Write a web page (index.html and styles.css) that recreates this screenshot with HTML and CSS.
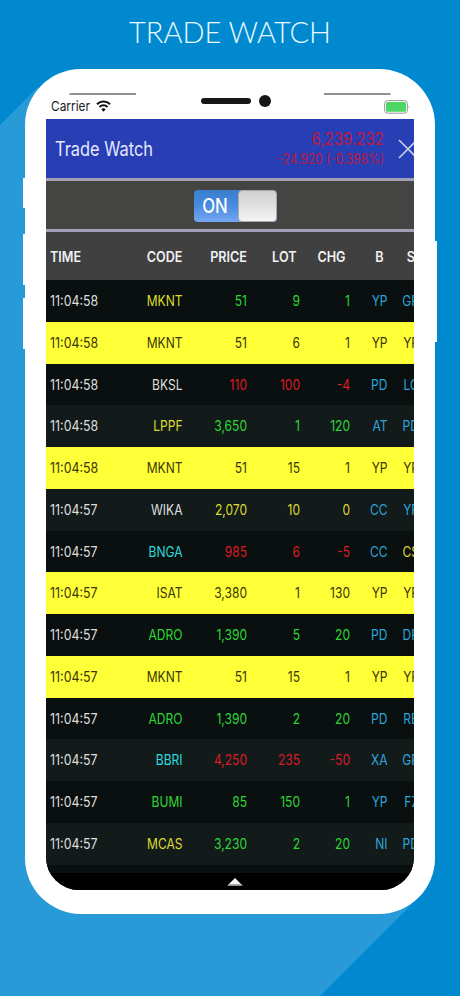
FILE: index.html
```
<!DOCTYPE html>
<html lang="en">
<head>
  <meta charset="UTF-8" />
  <meta name="viewport" content="width=device-width, initial-scale=1.0" />
  <title>Trade Watch</title>
  <link rel="stylesheet" href="styles.css">
</head>
<body>
  <h1>TRADE WATCH</h1>

  <div class="phone">
    <i class="side-button mute"></i>
    <i class="side-button volume-up"></i>
    <i class="side-button volume-down"></i>
    <i class="side-button power"></i>

    <div class="status-bar">
      <span class="carrier">Carrier</span>
      <svg class="wifi" width="15" height="12" viewBox="0 0 15 12">
        <path d="M1 4.2a9.2 9.2 0 0 1 13 0M3.5 6.9a5.7 5.7 0 0 1 8 0" fill="none" stroke="#111" stroke-width="2.1"/>
        <path d="M7.5 11.8 5.3 9.3a3.2 3.2 0 0 1 4.4 0z" fill="#111"/>
      </svg>
      <i class="speaker"></i>
      <i class="camera"></i>
      <svg class="battery" width="26" height="14" viewBox="0 0 26 14">
        <rect x=".6" y=".6" width="22.8" height="12.6" rx="3" fill="#fff" stroke="#999"/>
        <rect x="2" y="2" width="20" height="9.8" rx="1.6" fill="#4cd663"/>
        <path d="M24.4 6.2l1.2 1.8" stroke="#bbb"/>
      </svg>
      <i class="edge edge-left"></i>
      <i class="edge edge-right"></i>
    </div>

    <div class="screen">
      <header class="title-bar">
        <span class="title">Trade Watch</span>
        <div class="index">
          <div class="index-value">6,239.232</div>
          <div class="index-change">-24.920 (-0.398%)</div>
        </div>
        <svg class="close" width="20" height="20" viewBox="0 0 20 20">
          <path d="M1 1l18 18M19 1L1 19" stroke="#c3cbee" stroke-width="1.7"/>
        </svg>
      </header>

      <div class="switch-bar">
        <div class="switch"><span>ON</span><i></i></div>
      </div>

      <div class="row head">
        <span>TIME</span><span>CODE</span><span>PRICE</span><span>LOT</span><span>CHG</span><span>B</span><span>S</span>
      </div>
      <div id="trades"></div>

      <div class="drawer">
        <svg width="16" height="8" viewBox="0 0 18 8" preserveAspectRatio="none"><path d="M9 0l8.5 7.5H.5z" fill="#f4f4f4"/><path d="M2 6.2h14l1.5 1.3H.5z" fill="#999"/></svg>
      </div>
    </div>
  </div>

  <script>
    // time, code, price, lot, chg, buyer, seller, code color, number color, seller color
    const trades = [
      ['11:04:58', 'MKNT', '51', '9', '1', 'YP', 'GR', 'yellow', 'green'],
      ['11:04:58', 'MKNT', '51', '6', '1', 'YP', 'YP', 'marked'],
      ['11:04:58', 'BKSL', '110', '100', '-4', 'PD', 'LG', 'white', 'red'],
      ['11:04:58', 'LPPF', '3,650', '1', '120', 'AT', 'PD', 'yellow', 'green'],
      ['11:04:58', 'MKNT', '51', '15', '1', 'YP', 'YP', 'marked'],
      ['11:04:57', 'WIKA', '2,070', '10', '0', 'CC', 'YP', 'white', 'yellow'],
      ['11:04:57', 'BNGA', '985', '6', '-5', 'CC', 'CS', 'cyan', 'red', 'yellow'],
      ['11:04:57', 'ISAT', '3,380', '1', '130', 'YP', 'YP', 'marked'],
      ['11:04:57', 'ADRO', '1,390', '5', '20', 'PD', 'DR', 'green', 'green'],
      ['11:04:57', 'MKNT', '51', '15', '1', 'YP', 'YP', 'marked'],
      ['11:04:57', 'ADRO', '1,390', '2', '20', 'PD', 'RB', 'green', 'green'],
      ['11:04:57', 'BBRI', '4,250', '235', '-50', 'XA', 'GR', 'cyan', 'red'],
      ['11:04:57', 'BUMI', '85', '150', '1', 'YP', 'FZ', 'green', 'green'],
      ['11:04:57', 'MCAS', '3,230', '2', '20', 'NI', 'PD', 'yellow', 'green']
    ];

    const list = document.getElementById('trades');

    trades.forEach((trade) => {
      const [codeColor, numColor, sellerColor = 'blue'] = trade.slice(7);
      const marked = codeColor === 'marked';
      const colors = ['white', codeColor, numColor, numColor, numColor, 'blue', sellerColor];

      const row = document.createElement('div');
      row.className = marked ? 'row marked' : 'row';
      trade.slice(0, 7).forEach((text, i) => {
        const cell = document.createElement('span');
        cell.textContent = text;
        if (!marked) cell.className = colors[i];
        row.appendChild(cell);
      });
      list.appendChild(row);
    });
  </script>
</body>
</html>
```
FILE: styles.css
```
body {
  margin: 0;
  height: 996px;
  overflow: hidden;
  background: #0089cf;
  font-family: Inter, Roboto, sans-serif;
  position: relative;
}

/* lighter diagonal band behind the phone */
body::before {
  content: "";
  position: absolute;
  inset: 0;
  background: #279ad7;
  clip-path: polygon(0 125px, 38px 87px, 80px 150px, 380px 860px, 412px 904px, 320px 996px, 0 996px);
}

h1 {
  margin: 0;
  height: 69px;
  box-sizing: border-box;
  padding-top: 14px;
  text-align: center;
  font: 300 29px/36px Lato, sans-serif;
  color: #e9fbff;
  position: relative;
  white-space: nowrap;
}

.phone {
  position: relative;
  box-sizing: border-box;
  width: 410px;
  height: 844.5px;
  margin: 0 auto;
  padding: 24px 21px 0;
  border-radius: 56px;
  background: #fff;
}

.side-button {
  position: absolute;
  left: -2px;
  width: 4px;
  height: 51px;
  background: #fff;
}

.mute {
  top: 109px;
  height: 30px;
}

.volume-up {
  top: 165px;
}

.volume-down {
  top: 229px;
}

.power {
  left: auto;
  right: -2px;
  top: 172px;
  height: 101px;
}

.status-bar {
  position: relative;
  display: flex;
  align-items: center;
  height: 26px;
  padding: 0 4px 0 5px;
}

.carrier {
  width: 45px;
  font-size: 13.5px;
  line-height: 28px;
  color: #222;
  white-space: nowrap;
  transform: scaleX(.88);
  transform-origin: left;
}

.wifi {
  margin-top: -1px;
}

.speaker {
  width: 50px;
  height: 6px;
  margin: -10px 8px 0 90px;
  border-radius: 3px;
  background: #161616;
}

.camera {
  width: 12px;
  height: 12px;
  margin-top: -10px;
  border-radius: 50%;
  background: #161616;
}

.battery {
  margin: 2px 0 0 auto;
}

.edge {
  position: absolute;
  top: 0;
  width: 67px;
  height: 2px;
  background: #919191;
}

.edge-left {
  left: 23px;
  border-radius: 20px 2px 0 0;
}

.edge-right {
  right: 23px;
  border-radius: 2px 20px 0 0;
}

.screen {
  height: 770.5px;
  overflow: hidden;
  border-radius: 0 0 33px 33px;
  background: #000;
}

.title-bar {
  display: flex;
  align-items: center;
  height: 59px;
  background: #283eb5;
}

.title {
  width: 160px;
  padding-left: 9px;
  font-size: 19.5px;
  color: #e4e9ff;
  transform: scaleX(.84);
  transform-origin: 9px 50%;
  white-space: nowrap;
}

.index {
  flex: 1;
  text-align: right;
  color: #bb1a43;
  white-space: nowrap;
  transform: scaleX(.86);
  transform-origin: right;
}

.index-value {
  font-size: 17.5px;
  line-height: 21px;
}

.index-change {
  font-size: 13.8px;
  line-height: 21px;
}

.close {
  flex: none;
  margin: 0 -4px 0 14px;
}

.switch-bar {
  display: flex;
  justify-content: center;
  align-items: center;
  box-sizing: border-box;
  height: 54px;
  padding-left: 11px;
  border-top: 3px solid #a19fb5;
  border-bottom: 3px solid #a19fb5;
  background: #444542;
}

.switch {
  display: flex;
  width: 83px;
  height: 32px;
  margin-top: 2px;
  border-radius: 4px;
  overflow: hidden;
  background: linear-gradient(#397fcd, #498be0 50%, #76a6f2);
}

.switch span {
  width: 44px;
  margin-left: -1px;
  margin-right: 1px;
  text-align: center;
  font-size: 20.5px;
  line-height: 32px;
  font-weight: 500;
  color: #fff;
  transform: scaleX(.82);
}

.switch i {
  flex: 1;
  border: 1px solid #aaa;
  border-radius: 4px;
  background: linear-gradient(#cfcfcf, #e5e4e4 60%, #f5f5f5);
}

.row {
  display: grid;
  grid-template-columns: 64px 72.5px 64px 53px 50px 37.5px 32px;
  box-sizing: border-box;
  height: 41.75px;
  line-height: 42.5px;
  font-size: 14px;
  text-align: right;
  background: #0a0f0f;
}

.row:nth-child(even) {
  background: #131a1a;
}

.row span {
  white-space: nowrap;
  transform: scaleX(.86);
  transform-origin: right;
}

.row span:first-child {
  padding-left: 4px;
  text-align: left;
  transform: scaleX(.885);
  transform-origin: 4px 50%;
}

.row.head {
  grid-template-columns: 64px 72.5px 64px 49.5px 49.5px 37.5px 32px;
  height: 48px;
  line-height: 49px;
  font-size: 14px;
  font-weight: 600;
  color: #f2f2f2;
  background: #404040;
}

.row.head span {
  transform: scaleX(.9);
}

.row.marked {
  background: #ffff38;
  color: #3b3705;
}

.white { color: #dedede; }
.yellow { color: #dcdc30; }
.green { color: #2ed636; }
.red { color: #da1c26; }
.cyan { color: #2cd9dc; }
.blue { color: #2ba5d8; }

.drawer {
  display: flex;
  justify-content: center;
  box-sizing: border-box;
  height: 26px;
  padding: 5px 0 0 9px;
  border-top: 8px solid #0a0f0f;
  background: #000;
}
```
